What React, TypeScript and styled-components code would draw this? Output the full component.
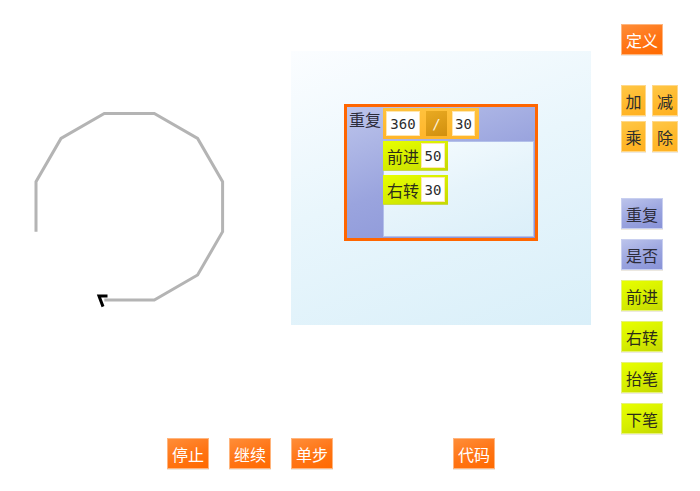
import React from "react";
import styled, { createGlobalStyle } from "styled-components";

const GlobalStyle = createGlobalStyle`
  html, body {
    margin: 0;
    padding: 0;
    background: #fff;
  }
  body {
    font-family: "Noto Sans CJK SC", "Noto Sans", sans-serif;
    font-size: 16px;
  }
`;

const Page = styled.div`
  width: 700px;
  height: 491px;
  display: flex;
  flex-direction: column;
  overflow: hidden;
`;

const Top = styled.div`
  display: flex;
  height: 438px;
`;

const Stage = styled.svg`
  width: 291px;
  height: 438px;
  flex: none;
`;

const Workspace = styled.div`
  width: 300px;
  height: 274px;
  margin-top: 51px;
  box-sizing: border-box;
  padding: 53px 0 0 53px;
  background: linear-gradient(160deg, #fbfdff 0%, #e9f6fc 45%, #d9eff9 100%);
`;

const RepeatBlock = styled.div`
  width: 194px;
  height: 137px;
  box-sizing: border-box;
  border: 3px solid #ff6600;
  background: linear-gradient(160deg, #bcc4eb 0%, #9aa4de 50%, #8893d7 100%);
  display: grid;
  grid-template-columns: 36px 151px;
  padding-right: 1px;
`;

const BlockLabel = styled.div`
  color: #2c2c3a;
  font-size: 16px;
  line-height: 20px;
  padding: 2px 0 0 2px;
  white-space: nowrap;
`;

const RepeatBody = styled.div`
  display: flex;
  flex-direction: column;
  gap: 3px;
  padding-top: 1px;
`;

const ParamBox = styled.div`
  align-self: flex-start;
  display: flex;
  align-items: center;
  gap: 6px;
  height: 31px;
  box-sizing: border-box;
  padding: 3px 4px 3px 3px;
  background: linear-gradient(180deg, #ffc23d 0%, #ffb52a 100%);
`;

const Field = styled.div<{ $w: number }>`
  width: ${(p) => p.$w}px;
  height: 25px;
  box-sizing: border-box;
  display: flex;
  align-items: center;
  justify-content: center;
  background: #fff;
  border: 1px solid #ffe6b0;
  color: #2c2c2c;
  font-family: "DejaVu Sans Mono", "Liberation Mono", monospace;
  font-size: 14px;
`;

const Operator = styled.div`
  width: 21px;
  height: 25px;
  margin-right: -1px;
  display: flex;
  align-items: center;
  justify-content: center;
  background: linear-gradient(160deg, #e9aa22 0%, #d18f0e 100%);
  color: #fff3d8;
  font-family: "DejaVu Sans Mono", "Liberation Mono", monospace;
  font-size: 14px;
`;

const Slot = styled.div`
  width: 151px;
  height: 96px;
  box-sizing: border-box;
  border: 1px solid #b3c0ea;
  background: linear-gradient(160deg, #f7fcff 0%, #e6f4fb 50%, #dbeff9 100%);
  display: flex;
  flex-direction: column;
  align-items: flex-start;
  gap: 4px;
  margin-top: -1px;
`;

const CommandBlock = styled.div`
  display: flex;
  align-items: center;
  gap: 2px;
  height: 30px;
  box-sizing: border-box;
  padding: 0 3px 0 4px;
  margin: -1px 0 0 -1px;
  background: linear-gradient(160deg, #e8ff00 0%, #d6ee00 50%, #c6d900 100%);
  border-bottom: 1px solid #c9d94a;
  color: #2c2c1a;
  font-size: 16px;
  & + & {
    margin-top: 0;
  }
`;

const CommandText = styled.span`
  width: 32px;
  white-space: nowrap;
  line-height: 20px;
`;

const Sidebar = styled.div`
  display: flex;
  flex-direction: column;
  align-items: flex-start;
  padding: 24px 0 0 30px;
`;

const palettes = {
  orange: {
    bg: "linear-gradient(160deg, #ff8d38 0%, #ff7414 55%, #ff6a00 100%)",
    fg: "#ffffff",
    edge: "#ffb57e",
  },
  gold: {
    bg: "linear-gradient(160deg, #ffc746 0%, #ffb92c 55%, #ffb020 100%)",
    fg: "#2c2c2c",
    edge: "#ffd88a",
  },
  purple: {
    bg: "linear-gradient(160deg, #bbc3eb 0%, #9aa4df 55%, #8892d7 100%)",
    fg: "#2c2c3a",
    edge: "#c8cff0",
  },
  lime: {
    bg: "linear-gradient(160deg, #e8ff00 0%, #d6ee00 55%, #c5d800 100%)",
    fg: "#2c2c1a",
    edge: "#e6f27a",
  },
};

type Tone = keyof typeof palettes;

const Button = styled.div<{ $tone: Tone; $w?: number }>`
  width: ${(p) => p.$w ?? 42}px;
  height: 31px;
  flex: none;
  box-sizing: border-box;
  display: flex;
  align-items: center;
  justify-content: center;
  background: ${(p) => palettes[p.$tone].bg};
  color: ${(p) => palettes[p.$tone].fg};
  border: 1px solid ${(p) => palettes[p.$tone].edge};
  box-shadow: 0 1px 0 #ece8e0;
  font-size: 16px;
  white-space: nowrap;
  cursor: pointer;
`;

const MathGrid = styled.div`
  display: grid;
  grid-template-columns: 25px 26px;
  column-gap: 6px;
  row-gap: 5px;
  margin-top: 30px;
`;

const BlockList = styled.div`
  display: flex;
  flex-direction: column;
  gap: 10px;
  margin-top: 46px;
`;

const Toolbar = styled.div`
  display: flex;
  align-items: flex-start;
  gap: 20px;
  padding-left: 167px;
`;

const ToolbarGap = styled.div`
  width: 80px;
`;

// turtle path: a 12-gon of side 50, stopped after ten sides
const trail = (() => {
  const pts: [number, number][] = [[36, 231.7]];
  let heading = 0;
  for (let i = 0; i < 10; i++) {
    const [x, y] = pts[pts.length - 1];
    const rad = (heading * Math.PI) / 180;
    pts.push([x + 50 * Math.sin(rad), y - 50 * Math.cos(rad)]);
    heading += 30;
  }
  return pts.map(([x, y]) => `${x.toFixed(1)},${y.toFixed(1)}`).join(" ");
})();

const App = () => {
  return (
    <Page>
      <GlobalStyle />
      <Top>
        <Stage viewBox="0 0 291 438">
          <polyline
            points={trail}
            fill="none"
            stroke="#b4b4b4"
            strokeWidth={3}
            strokeLinejoin="miter"
          />
          <path
            d="M107.5 296 L99 296 L103 306.6"
            fill="none"
            stroke="#000"
            strokeWidth={3}
            strokeLinejoin="miter"
          />
        </Stage>

        <Workspace>
          <RepeatBlock>
            <BlockLabel>重复</BlockLabel>
            <RepeatBody>
              <ParamBox>
                <Field $w={34}>360</Field>
                <Operator>/</Operator>
                <Field $w={23}>30</Field>
              </ParamBox>
              <Slot>
                <CommandBlock>
                  <CommandText>前进</CommandText>
                  <Field $w={24}>50</Field>
                </CommandBlock>
                <CommandBlock>
                  <CommandText>右转</CommandText>
                  <Field $w={24}>30</Field>
                </CommandBlock>
              </Slot>
            </RepeatBody>
          </RepeatBlock>
        </Workspace>

        <Sidebar>
          <Button $tone="orange">定义</Button>
          <MathGrid>
            <Button $tone="gold" $w={25}>加</Button>
            <Button $tone="gold" $w={26}>减</Button>
            <Button $tone="gold" $w={25}>乘</Button>
            <Button $tone="gold" $w={26}>除</Button>
          </MathGrid>
          <BlockList>
            <Button $tone="purple">重复</Button>
            <Button $tone="purple">是否</Button>
            <Button $tone="lime">前进</Button>
            <Button $tone="lime">右转</Button>
            <Button $tone="lime">抬笔</Button>
            <Button $tone="lime">下笔</Button>
          </BlockList>
        </Sidebar>
      </Top>

      <Toolbar>
        <Button $tone="orange">停止</Button>
        <Button $tone="orange">继续</Button>
        <Button $tone="orange">单步</Button>
        <ToolbarGap />
        <Button $tone="orange">代码</Button>
      </Toolbar>
    </Page>
  );
};

export default App;
